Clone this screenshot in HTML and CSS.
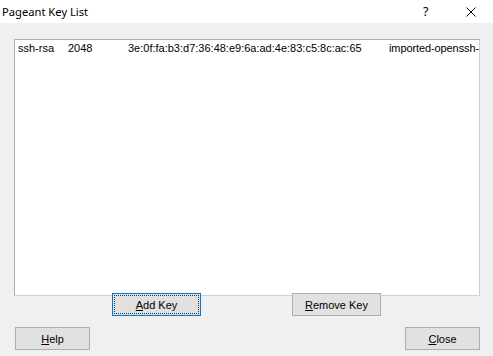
FILE: index.html
```html
<!DOCTYPE html>
<html lang="en">
<head>
<meta charset="UTF-8">
<meta name="viewport" content="width=device-width, initial-scale=1.0">
<title>Pageant Key List</title>
<link rel="stylesheet" href="styles.css">
</head>
<body>

<div class="dialog">
    <div class="titlebar">
        <span class="title">Pageant Key List</span>
        <span class="help-mark">?</span>
        <span class="close-mark">
            <svg width="10" height="10" viewBox="0 0 10 10">
                <path d="M0.5 0.5 L9.5 9.5 M9.5 0.5 L0.5 9.5" stroke="#000" stroke-width="1" fill="none"/>
            </svg>
        </span>
    </div>

    <div class="body">
        <div class="keylist">
            <div class="row">
                <span class="col-type">ssh-rsa</span>
                <span class="col-bits">2048</span>
                <span class="col-fp">3e:0f:fa:b3:d7:36:48:e9:6a:ad:4e:83:c5:8c:ac:65</span>
                <span class="col-comment">imported-openssh-</span>
            </div>
        </div>

        <div class="key-buttons">
            <button class="btn btn-focus"><span class="inner"><u>A</u>dd Key</span></button>
            <button class="btn"><span class="inner"><u>R</u>emove Key</span></button>
        </div>

        <div class="dialog-buttons">
            <button class="btn btn-small"><span class="inner"><u>H</u>elp</span></button>
            <button class="btn btn-small"><span class="inner"><u>C</u>lose</span></button>
        </div>
    </div>
</div>

</body>
</html>
```

FILE: styles.css
```css
body {
    margin: 0;
    padding: 0;
    background-color: #f0f0f0;
    font-family: "Liberation Sans", Arial, sans-serif;
}

.dialog {
    width: 493px;
    height: 356px;
    overflow: hidden;
}

.titlebar {
    height: 23px;
    background-color: #ffffff;
    display: flex;
    align-items: center;
    font-family: "Noto Sans", sans-serif;
    font-size: 11.2px;
    color: #000000;
}

.title {
    padding-left: 2px;
    flex: 1;
}

.help-mark {
    width: 10px;
    margin-right: 33px;
    font-size: 12.5px;
}

.close-mark {
    display: flex;
    margin-right: 17px;
}

.body {
    padding: 16px 13px 0 14px;
}

/* listbox */
.keylist {
    width: 464px;
    height: 255px;
    background-color: #ffffff;
    border: 1px solid #adadad;
    border-right-color: #cfcfcf;
    border-bottom-color: #cfcfcf;
    overflow: hidden;
}

.row {
    display: flex;
    white-space: nowrap;
    font-size: 11px;
    line-height: 13px;
    padding: 2px 0 0 3px;
    color: #000000;
}

.col-type {
    width: 50px;
    flex: none;
}

.col-bits {
    width: 60px;
    flex: none;
}

.col-fp {
    width: 261px;
    flex: none;
}

.col-comment {
    flex: none;
    letter-spacing: -0.1px;
}

/* buttons */
.key-buttons {
    display: flex;
    gap: 91px;
    padding-left: 98px;
    margin-top: -3px;
}

.dialog-buttons {
    display: flex;
    justify-content: space-between;
    padding: 0 0 0 1px;
    margin-top: 11px;
    width: 465px;
}

.btn {
    width: 89px;
    height: 23px;
    padding: 0;
    background-color: #e1e1e1;
    border: 1px solid #adadad;
    font-family: "Liberation Sans", Arial, sans-serif;
    font-size: 11px;
    color: #000000;
    display: flex;
    align-items: stretch;
}

.btn .inner {
    flex: 1;
    display: flex;
    align-items: center;
    justify-content: center;
    margin: 1px;
    border: 1px solid transparent;
}

.btn-small {
    width: 75px;
}

.btn-focus {
    border-color: #0078d7;
}

.btn-focus .inner {
    border: 1px dotted #333333;
}
```
